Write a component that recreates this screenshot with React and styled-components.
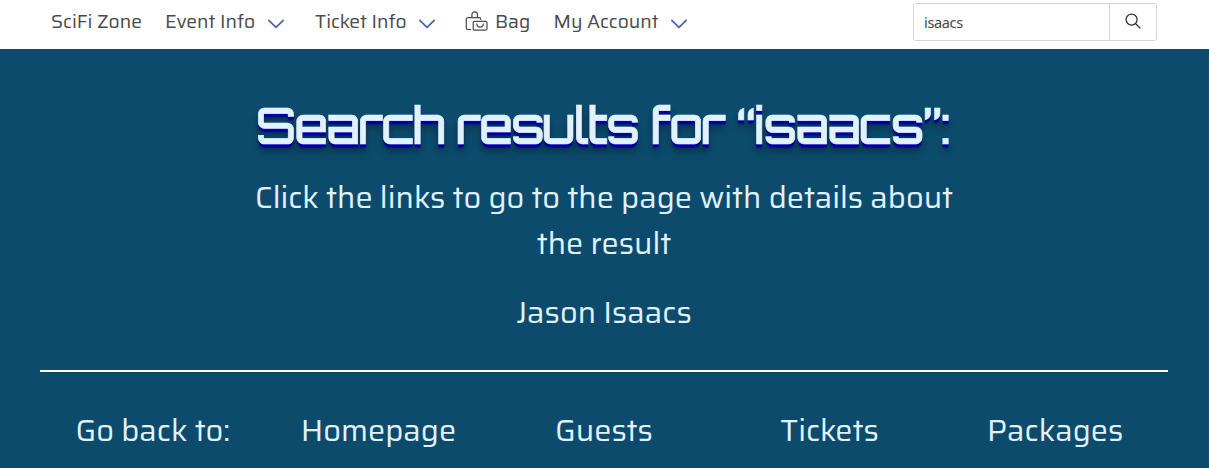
import React from "react";
import styled, { createGlobalStyle } from "styled-components";

const Global = createGlobalStyle`
  *, *::before, *::after { box-sizing: border-box; }
  html, body { margin: 0; padding: 0; overflow: hidden; background: #0d4b6c; }
  body { font-family: "Saira", Roboto, sans-serif; }
`;

const Header = styled.header`
  display: flex;
  justify-content: space-between;
  height: 49px;
  padding: 3px 52px 0 51px;
  background: #fff;
`;

const Nav = styled.nav`
  display: flex;
  height: 37px;
  align-items: center;
`;

const NavItem = styled.a`
  display: flex;
  align-items: center;
  width: ${(p) => p.$width}px;
  color: #4a4a4a;
  font-size: 19.2px;
  line-height: 29px;
  white-space: nowrap;
`;

const NavLabel = styled.span`
  flex: none;
  width: ${(p) => p.$width}px;
`;

const ChevronIcon = styled.svg`
  flex: none;
  width: 18px;
  height: 10px;
  margin-top: 4px;
  fill: none;
  stroke: #4c5fb0;
  stroke-width: 1.7;
  stroke-linecap: round;
  stroke-linejoin: round;
`;

const BagIcon = styled.svg`
  flex: none;
  width: 23px;
  height: 20px;
  margin: -1px 7px 0 0;
  fill: none;
  stroke: #4a4a4a;
  stroke-width: 1.2;
  stroke-linecap: round;
  stroke-linejoin: round;
`;

const SearchForm = styled.form`
  display: flex;
  width: 244px;
  height: 38px;
  border: 1px solid #d6d6d6;
  border-radius: 3px;
  overflow: hidden;
`;

const SearchInput = styled.input`
  flex: 1;
  min-width: 0;
  padding: 0 10px 1px;
  border: 0;
  outline: 0;
  background: #fff;
  color: #444;
  font: 400 14.5px "Noto Sans", sans-serif;
  letter-spacing: -0.35px;
`;

const SearchButton = styled.button`
  display: flex;
  align-items: center;
  justify-content: center;
  width: 47px;
  padding: 0 0 2px;
  border: 0;
  border-left: 1px solid #d6d6d6;
  background: #fff;
  color: #333;
`;

const Main = styled.main`
  height: 419px;
  padding: 48px 41px 0 40px;
  background: #0d4b6c;
  color: #e0f2ff;
  text-align: center;
`;

const Title = styled.h1`
  margin: 0;
  padding-right: 3px;
  font: 500 49px/56px "Orbitron", Inter, sans-serif;
  letter-spacing: -1.88px;
  white-space: nowrap;
  -webkit-text-stroke: 0.6px #e0f2ff;
  text-shadow: 0 1px 0 #0000b4, 0 2px 0 #0000a8, 0 3px 0 #0000a0,
    0 4px 1px rgba(0, 0, 150, 0.6), 0 6px 5px rgba(0, 0, 0, 0.25),
    0 9px 10px rgba(0, 0, 0, 0.2);
`;

const Line = styled.p`
  margin: ${(p) => p.$top || 0}px 0 0;
  font-size: 30.72px;
  line-height: 46px;
  white-space: nowrap;
`;

const Rule = styled.hr`
  height: 2px;
  margin: 35px 0;
  border: 0;
  background: #fff;
`;

const Footer = styled.footer`
  display: grid;
  grid-template-columns: repeat(5, 1fr);
`;

const Chevron = () => (
  <ChevronIcon viewBox="0 0 18 10">
    <path d="M1.8 1.4 9 8.3l7.2-6.9" />
  </ChevronIcon>
);

export default function App() {
  return (
    <>
      <Global />
      <Header>
        <Nav>
          <NavItem $width={114}>SciFi Zone</NavItem>
          <NavItem $width={150}>
            <NavLabel $width={102}>Event Info</NavLabel>
            <Chevron />
          </NavItem>
          <NavItem $width={150}>
            <NavLabel $width={103}>Ticket Info</NavLabel>
            <Chevron />
          </NavItem>
          <NavItem $width={88.5}>
            <BagIcon viewBox="0 0 23 20">
              <path d="M5.8 18.5H2.9a1.6 1.6 0 0 1-1.6-1.6V8.2a1.6 1.6 0 0 1 1.6-1.6h11.3a1.6 1.6 0 0 1 1.6 1.6v.3" />
              <path d="M6.9 6.6V3.7a2.8 2.8 0 0 1 5.6 0v2.9" />
              <rect x="8.2" y="10.3" width="13.8" height="8.9" rx="1.4" />
              <path d="M11.9 12.9v.2a3.2 3 0 0 0 6.4 0v-.2" />
            </BagIcon>
            Bag
          </NavItem>
          <NavItem $width={135}>
            <NavLabel $width={116}>My Account</NavLabel>
            <Chevron />
          </NavItem>
        </Nav>
        <SearchForm>
          <SearchInput defaultValue="isaacs" aria-label="Search" />
          <SearchButton type="button" aria-label="Submit search">
            <svg width="16" height="16" viewBox="0 0 16 16" fill="none" stroke="currentColor" strokeWidth="1.3" strokeLinecap="round">
              <circle cx="6.6" cy="6.6" r="5.5" />
              <path d="m10.7 10.7 4.3 4.3" />
            </svg>
          </SearchButton>
        </SearchForm>
      </Header>
      <Main>
        <Title>Search results for “isaacs”:</Title>
        <Line $top={21}>Click the links to go to the page with details about</Line>
        <Line>the result</Line>
        <Line $top={23}>Jason Isaacs</Line>
        <Rule />
        <Footer>
          <Line as="span">Go back to:</Line>
          <Line as="a">Homepage</Line>
          <Line as="a">Guests</Line>
          <Line as="a">Tickets</Line>
          <Line as="a">Packages</Line>
        </Footer>
      </Main>
    </>
  );
}
